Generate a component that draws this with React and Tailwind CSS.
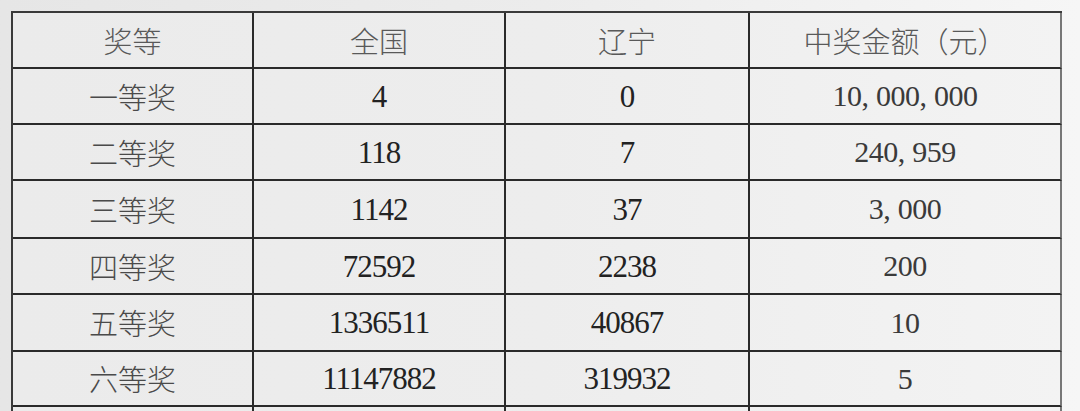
import React from "react";

const rows = [
  { name: "一等奖", all: "4", ln: "0", money: "10,000,000", h: "h-[56px]" },
  { name: "二等奖", all: "118", ln: "7", money: "240,959", h: "h-[56px]" },
  { name: "三等奖", all: "1142", ln: "37", money: "3,000", h: "h-[58px]" },
  { name: "四等奖", all: "72592", ln: "2238", money: "200", h: "h-[56px]" },
  { name: "五等奖", all: "1336511", ln: "40867", money: "10", h: "h-[57px]" },
  { name: "六等奖", all: "11147882", ln: "319932", money: "5", h: "h-[55px]" },
];

const cjk = { fontFamily: '"Noto Sans CJK SC", sans-serif' };
const serif = { fontFamily: '"Liberation Serif", "Noto Sans CJK SC", serif' };

// printed commas are half-width, give them a full digit cell
const Money = ({ value }) => (
  <span>
    {value.split("").map((ch, i) =>
      ch === "," ? (
        <span key={i} className="inline-block w-[14.5px] text-left">
          ,
        </span>
      ) : (
        <span key={i}>{ch}</span>
      )
    )}
  </span>
);

const Cell = ({ children, className = "" }) => (
  <div
    className={`flex items-center justify-center border-r-2 border-b-2 border-[#2a2a2a] ${className}`}
  >
    {children}
  </div>
);

export default function App() {
  return (
    <div className="h-[411px] w-[1080px] overflow-hidden bg-gradient-to-r from-[#e6e6e6] via-[#ececec] to-[#f6f6f6] pl-[11px] pt-[11px]">
      <div className="grid w-[1051px] grid-cols-[241px_252px_244px_312px] border-t-2 border-l-2 border-[#3a3a3a] bg-gradient-to-r from-[#ebebeb] via-[#ededed] to-[#f3f3f3] text-[29px] leading-none">
        <Cell className="h-[56px] text-[#595959]">
          <span style={cjk} className="font-light">奖等</span>
        </Cell>
        <Cell className="h-[56px] text-[#595959]">
          <span style={cjk} className="font-light">全国</span>
        </Cell>
        <Cell className="h-[56px] text-[#595959]">
          <span style={cjk} className="font-light">辽宁</span>
        </Cell>
        <Cell className="h-[56px] border-r-[#777] text-[#595959]">
          <span style={cjk} className="font-light">中奖金额（元）</span>
        </Cell>

        {rows.map((r) => (
          <React.Fragment key={r.name}>
            <Cell className={`${r.h} text-[#4a4a4a]`}>
              <span style={cjk} className="font-light">{r.name}</span>
            </Cell>
            <Cell className={`${r.h} text-[#222]`}>
              <span style={serif} className="text-[31px] tracking-[-1px]">{r.all}</span>
            </Cell>
            <Cell className={`${r.h} text-[#222]`}>
              <span style={serif} className="text-[31px] tracking-[-1px]">{r.ln}</span>
            </Cell>
            <Cell className={`${r.h} border-r-[#777] text-[#3a3a3a]`}>
              <span style={serif} className="text-[30px] tracking-[-0.5px]">
                <Money value={r.money} />
              </span>
            </Cell>
          </React.Fragment>
        ))}

        <Cell className="h-[56px]" />
        <Cell className="h-[56px]" />
        <Cell className="h-[56px]" />
        <Cell className="h-[56px] border-r-[#777]" />
      </div>
    </div>
  );
}
